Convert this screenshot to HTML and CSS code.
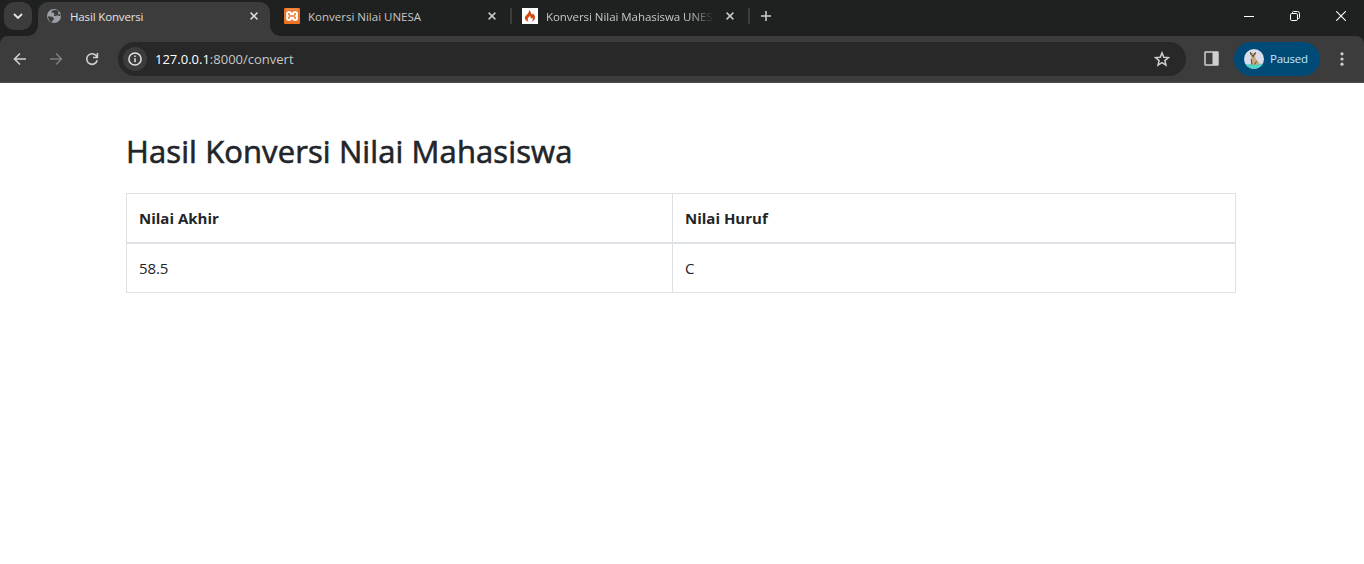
FILE: index.html
```
<!DOCTYPE html>
<html lang="id">
<head>
<meta charset="utf-8">
<title>Hasil Konversi</title>
<link rel="stylesheet" href="styles.css">
</head>
<body>
<header class="browser">
  <div class="tabstrip">
    <button class="tab-search" aria-label="Search tabs"><svg width="10" height="6" viewBox="0 0 10 6"><path d="M1 1l4 4 4-4" fill="none" stroke="#e8e8e8" stroke-width="1.8"/></svg></button>
    <div class="tab active">
      <svg class="favicon" width="16" height="16" viewBox="0 0 16 16"><circle cx="8" cy="8" r="7" fill="#9aa0a6"/><path d="M8.4 1.9c-2 .2-3 1.4-3.3 2.6l2 .1 1.3 1.4-.6 1.7 1.8.4 2.2-.8 1.5.8 1.1-.2-.2-1.8-1.8.2-.6-1.4 1.1-1.2-1.6-1.4zM1.9 8.3l4.3.5 1.7 1.5-.3 1.6-1.2.5-.3 2-1.8-1-1.6-2z" fill="#3c3c3c"/></svg>
      <span class="tab-title t1">Hasil Konversi</span>
      <svg class="close" width="8" height="8" viewBox="0 0 8 8"><path d="M.6.6l6.8 6.8M7.4.6L.6 7.4" stroke="#dedede" stroke-width="1.5"/></svg>
    </div>
    <div class="tab">
      <svg class="favicon" width="16" height="16" viewBox="0 0 16 16"><rect width="16" height="16" rx="1" fill="#ee7323"/><path d="M2 1.2h12" stroke="#f7aa78" stroke-width=".8"/><path d="M5 4C2.600 4 2.300 6.800 4 8c-1.700 1.200-1.400 4 1 4 1.700 0 1.900-1.200 1.900-2.200h2.200c0 1 .2 2.200 1.900 2.200 2.400 0 2.700-2.800 1-4 1.700-1.200 1.400-4-1-4-1.700 0-1.900 1.200-1.900 2.200H6.900C6.900 5.200 6.700 4 5 4z" fill="none" stroke="#fff" stroke-width="2.100"/></svg>
      <span class="tab-title">Konversi Nilai UNESA</span>
      <svg class="close" width="8" height="8" viewBox="0 0 8 8"><path d="M.6.6l6.8 6.8M7.4.6L.6 7.4" stroke="#c7c7c7" stroke-width="1.5"/></svg>
    </div>
    <div class="tab divided">
      <svg class="favicon" width="16" height="16" viewBox="0 0 16 16"><path fill="#fff" d="M0 0h16v16H0z"/><path d="M7 2c2.300 1.500 1.700 3.300 2.600 4.300.5.500 1.100.3 1.200-1 1.700 1.600 2.600 3.500 2.100 5.300-.5 1.700-1.800 2.700-3.500 3.300 1.600-1.400 2-3 .7-4.400-.2.900-.7 1.200-1.200.8-.6-.5-.2-1.500-.9-2.700-.3 1.700-2.300 2-2.300 3.800 0 1.100.6 1.900 1.200 2.400-2.300-.4-4-1.700-4-3.800C2.900 7.200 7.500 5.900 7 2z" fill="#d2480f"/></svg>
      <span class="tab-title t3">Konversi Nilai Mahasiswa UNES</span>
      <svg class="close" width="8" height="8" viewBox="0 0 8 8"><path d="M.6.6l6.8 6.8M7.4.6L.6 7.4" stroke="#c7c7c7" stroke-width="1.5"/></svg>
    </div>
    <div class="new-tab"><svg width="10" height="10" viewBox="0 0 10 10"><path d="M5 0v10M0 5h10" stroke="#d0d0d0" stroke-width="1.5"/></svg></div>
    <div class="window-controls">
      <svg width="10" height="10" viewBox="0 0 10 10"><path d="M0 5.500h10" stroke="#fff"/></svg>
      <svg width="10" height="10" viewBox="0 0 10 10" fill="none" stroke="#fff"><rect x=".5" y="2.500" width="7" height="7" rx="1.300"/><path d="M2.500 2V1.500q0-1 1-1H7.500q2 0 2 2v4q0 1-1 1H8"/></svg>
      <svg width="10" height="10" viewBox="0 0 10 10"><path d="M.2.2l9.600 9.600M9.800.2L.2 9.800" stroke="#fff" stroke-width="1.100"/></svg>
    </div>
  </div>
  <div class="toolbar">
    <nav class="nav">
      <svg width="16" height="16" viewBox="0 0 16 16" fill="none" stroke="#d0d0d0" stroke-width="1.600"><path d="M14 8H3M8 2.500L2.500 8 8 13.500"/></svg>
      <svg width="16" height="16" viewBox="0 0 16 16" fill="none" stroke="#7d7d7d" stroke-width="1.600"><path d="M2 8h11M8 2.500L13.500 8 8 13.500"/></svg>
      <svg width="16" height="16" viewBox="0 0 16 16" fill="none" stroke="#d0d0d0" stroke-width="1.600"><path d="M13.200 9.200A5.300 5.300 0 1 1 12 4.500l1.300 1.600M13.400 2v4.500H9"/></svg>
    </nav>
    <div class="omnibox">
      <span class="site-info"><svg width="14" height="14" viewBox="0 0 14 14"><circle cx="7" cy="7" r="6.100" fill="none" stroke="#e3e3e3" stroke-width="1.500"/><path d="M7 6.300v4M7 3.600v1.500" stroke="#e3e3e3" stroke-width="1.500"/></svg></span>
      <span class="url"><b>127.0.0.1</b>:8000/convert</span>
      <svg class="star" width="16" height="16" viewBox="0 0 16 16"><path d="M8 1.900l1.800 4.300 4.600.4-3.500 3 1.100 4.500L8 11.700l-4 2.400 1.100-4.500-3.500-3 4.600-.4z" fill="none" stroke="#cfcfcf" stroke-width="1.500"/></svg>
    </div>
    <svg class="panel" width="15" height="15" viewBox="0 0 15 15"><rect x="1" y="1" width="13" height="13" rx=".5" fill="none" stroke="#cfcfcf" stroke-width="1.500"/><path d="M8.500 1H14v13H8.500z" fill="#cfcfcf"/></svg>
    <div class="profile">
      <svg width="20" height="20" viewBox="0 0 20 20"><clipPath id="avatar"><circle cx="10" cy="10" r="10"/></clipPath><g clip-path="url(#avatar)"><path fill="#dadce9" d="M0 0h20v20H0z"/><path fill="#4fd5c5" d="M0 15.500l20-1V20H0z"/><path d="M7.500 7l3.500.2c.2 3 2.800 4 3.800 6.300.5 1.500-.5 2.300-2 2.300H7.200z" fill="#c9a97a"/><path d="M5.800 3l2 1.400h2.400l1.700-1.200-.8 3.200-2 2.200-2.400-2.100z" fill="#b99465"/><path d="M5.800 2.800l2 1.500-.7 2.100zM11.900 3l-1.800 1.300.8 2.100zM8 6.300h2l-.9 2.300z" fill="#302a29"/><path d="M7.300 10l.6 5.500M12.500 12.500l-2 3" stroke="#574638"/></g></svg>
      <span>Paused</span>
    </div>
    <svg class="menu" width="4" height="14" viewBox="0 0 4 14" fill="#cfcfcf"><circle cx="2" cy="1.800" r="1.600"/><circle cx="2" cy="7" r="1.600"/><circle cx="2" cy="12.200" r="1.600"/></svg>
  </div>
</header>
<main class="container">
  <h1>Hasil Konversi Nilai Mahasiswa</h1>
  <table class="grades">
    <thead><tr><th>Nilai Akhir</th><th>Nilai Huruf</th></tr></thead>
    <tbody><tr><td>58.5</td><td>C</td></tr></tbody>
  </table>
</main>
</body>
</html>
```
FILE: styles.css
```
* { box-sizing: border-box; }
body { margin: 0; background: #fff; color: #212529; font-family: "Open Sans", "Noto Sans", sans-serif; }
svg { display: block; flex: none; }
.browser { background: #1f2120; }
.tabstrip { display: flex; height: 36px; padding-left: 4px; }
.tab-search { display: flex; align-items: center; justify-content: center; width: 28px; height: 28px; margin: 2px 6px 0 0; padding: 0; border: 0; border-radius: 10px; background: #3c3c3c; }
.tab { position: relative; display: flex; align-items: center; width: 238px; height: 36px; padding: 0 12px 4px 14px; color: #c7c7c7; }
.tab.active { width: 232px; height: 34px; margin-top: 2px; padding: 0 12px 6px 8px; border-radius: 10px 10px 0 0; background: #3c3c3c; color: #e3e3e3; }
.tab.active::before, .tab.active::after { content: ""; position: absolute; bottom: 0; width: 10px; height: 10px; }
.tab.active::before { left: -10px; background: radial-gradient(circle at 0 0, transparent 9.5px, #3c3c3c 10px); }
.tab.active::after { right: -10px; background: radial-gradient(circle at 100% 0, transparent 9.5px, #3c3c3c 10px); }
.tab.divided::before, .new-tab::before { content: ""; position: absolute; left: 2px; top: 8px; width: 2px; height: 16px; background: #3c3c3c; }
.tab-title { flex: 1; min-width: 0; margin: 2px 12px 0 8px; overflow: hidden; white-space: nowrap; font-size: 11.5px; line-height: 18px; }
.t1 { letter-spacing: -.15px; }
.t3 { letter-spacing: -.05px; -webkit-mask-image: linear-gradient(to right, #000 calc(100% - 24px), transparent); mask-image: linear-gradient(to right, #000 calc(100% - 24px), transparent); }
.new-tab { position: relative; padding: 11px 0 0 15px; }
.window-controls { display: flex; gap: 36px; margin-left: auto; padding: 11px 18px 0 0; }
.toolbar { display: flex; align-items: center; height: 47px; padding: 0 20px 1px 12px; border-bottom: 1px solid #4a4a4a; border-radius: 8px 8px 0 0; background: #3c3c3c; }
.nav { display: flex; gap: 20px; margin-right: 18px; }
.omnibox { display: flex; align-items: center; width: 1068px; height: 34px; padding: 0 16px 0 5px; border-radius: 17px; background: #282828; }
.site-info { display: flex; align-items: center; justify-content: center; width: 24px; height: 24px; border-radius: 50%; background: #3c3c3c; }
.url { flex: 1; margin-left: 8px; color: #c7c7c7; font-size: 13px; }
.url b { color: #fff; font-weight: 400; }
.panel { margin-left: 18px; }
.profile { display: flex; align-items: center; gap: 6px; width: 86px; height: 34px; margin-left: 15px; padding-left: 10px; border-radius: 17px; background: #004a77; color: #c2e7ff; font-size: 11.5px; letter-spacing: -.25px; }
.menu { margin-left: 20px; }
.container { width: 1110px; margin-left: 126px; padding-top: 49px; }
h1 { margin: 0 0 23px; font-size: 31px; font-weight: 500; line-height: 38px; letter-spacing: .1px; white-space: nowrap; -webkit-text-stroke: .6px #212529; }
.grades { width: 1110px; table-layout: fixed; border-collapse: separate; border-spacing: 0; border: solid #dee2e6; border-width: 1px 0 0 1px; font-size: 15px; line-height: 24px; text-align: left; }
.grades th, .grades td { padding: 12px; border: solid #dee2e6; border-width: 0 1px 1px 0; }
.grades th { border-bottom-width: 2px; font-weight: 700; }
.grades th:first-child { width: 546px; }
.grades td { letter-spacing: -.1px; }
```
